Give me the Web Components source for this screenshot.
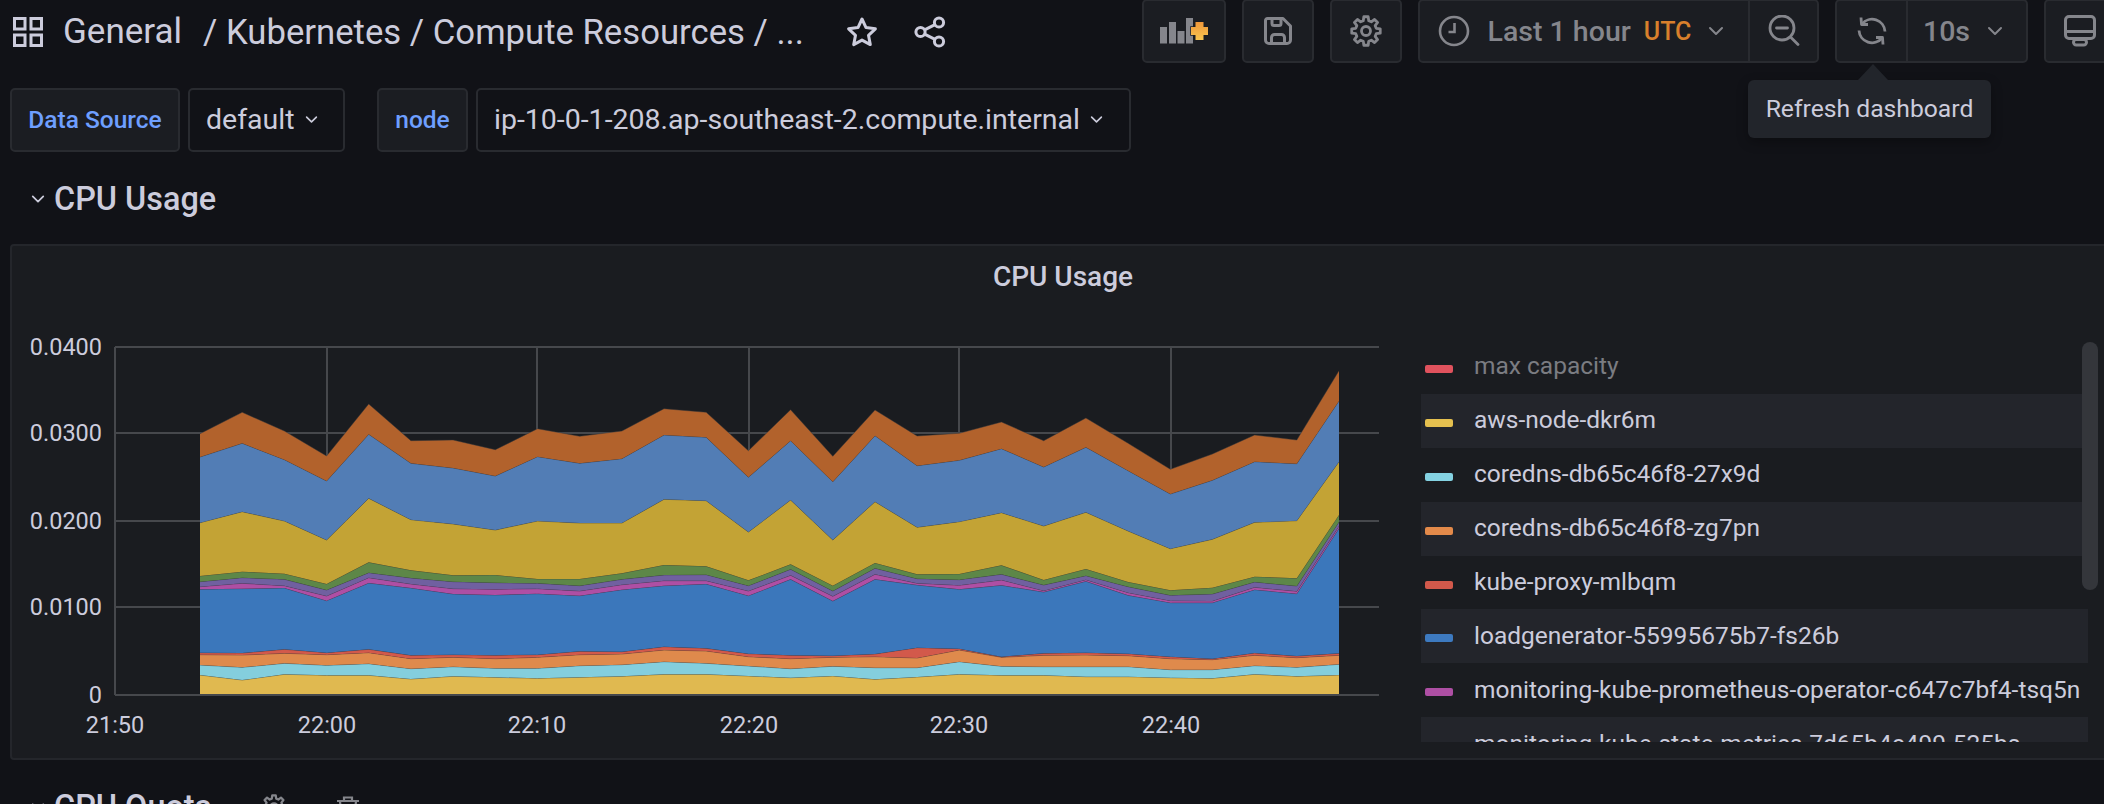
<!DOCTYPE html>
<html>
<head>
<meta charset="utf-8">
<title>Kubernetes / Compute Resources</title>
<style>
html, body {
    margin: 0;
    height: 804px;
    overflow: hidden;
    background: #111217;
    color: #ccccdc;
    font-family: Roboto, "Liberation Sans", sans-serif;
}
.muted { color: #85868c; font-weight: 500; font-size: 28.5px; }
.utc { color: #d8802c; font-weight: 500; font-size: 25px; margin-left: 13px; }
</style>
</head>
<body>

<gf-dashboard>
    <gf-toolbar>
        <gf-icon slot="title" name="grid" size="30"></gf-icon>
        <gf-title slot="title" folder="General" path="/ Kubernetes / Compute Resources / ..."></gf-title>
        <gf-icon slot="title" name="star" size="32" style="margin-left:42px"></gf-icon>
        <gf-icon slot="title" name="share" size="32" style="margin-left:36px"></gf-icon>

        <gf-tool-group><gf-tool-item style="width:80px"><gf-icon name="addpanel" size="56"></gf-icon></gf-tool-item></gf-tool-group>
        <gf-tool-group><gf-tool-item style="width:68px"><gf-icon name="save" size="30"></gf-icon></gf-tool-item></gf-tool-group>
        <gf-tool-group><gf-tool-item style="width:68px"><gf-icon name="gear" size="32"></gf-icon></gf-tool-item></gf-tool-group>
        <gf-tool-group>
            <gf-tool-item style="width:328px;padding-right:6px">
                <gf-icon name="clock" size="32" style="margin-right:18px"></gf-icon>
                <span class="muted">Last 1 hour</span>
                <span class="utc">UTC</span>
                <gf-icon name="chevron" size="16" style="margin-left:17px;color:#85868c"></gf-icon>
            </gf-tool-item>
            <gf-tool-item style="width:69px"><gf-icon name="zoomout" size="32"></gf-icon></gf-tool-item>
        </gf-tool-group>
        <gf-tool-group>
            <gf-tool-item style="width:69px">
                <gf-icon name="sync" size="30"></gf-icon>
                <gf-tooltip>Refresh dashboard</gf-tooltip>
            </gf-tool-item>
            <gf-tool-item style="width:120px;padding-right:8px">
                <span class="muted">10s</span>
                <gf-icon name="chevron" size="16" style="margin-left:17px;color:#85868c"></gf-icon>
            </gf-tool-item>
        </gf-tool-group>
        <gf-tool-group><gf-tool-item style="width:68px"><gf-icon name="monitor" size="32"></gf-icon></gf-tool-item></gf-tool-group>
    </gf-toolbar>

    <gf-variables>
        <gf-variable label="Data Source" value="default" width="170" select-width="157"></gf-variable>
        <gf-variable label="node" value="ip-10-0-1-208.ap-southeast-2.compute.internal" width="91" select-width="655"></gf-variable>
    </gf-variables>

    <gf-row-title>CPU Usage</gf-row-title>

    <gf-panel title="CPU Usage">
        <gf-chart></gf-chart>
        <gf-legend>
            <gf-legend-item color="#e0525d" dim>max capacity</gf-legend-item>
            <gf-legend-item color="#e5c04f">aws-node-dkr6m</gf-legend-item>
            <gf-legend-item color="#84d2e2">coredns-db65c46f8-27x9d</gf-legend-item>
            <gf-legend-item color="#e38a4a">coredns-db65c46f8-zg7pn</gf-legend-item>
            <gf-legend-item color="#d2594b">kube-proxy-mlbqm</gf-legend-item>
            <gf-legend-item color="#3d7ac0">loadgenerator-55995675b7-fs26b</gf-legend-item>
            <gf-legend-item color="#ae4fa4">monitoring-kube-prometheus-operator-c647c7bf4-tsq5n</gf-legend-item>
            <gf-legend-item color="#7060a0">monitoring-kube-state-metrics-7d65b4c499-525bs</gf-legend-item>
        </gf-legend>
    </gf-panel>

    <gf-row-title actions>CPU Quota</gf-row-title>
</gf-dashboard>

<script>
// Gear outline, 8 teeth, centred on 16,16
function gearPath () {
    let d			= "";
    for ( let i = 0; i < 8; i++ ) {
        const a			= i * Math.PI / 4;
        const pts		= [ [ -0.26, 10.6 ], [ -0.15, 14.4 ], [ 0.15, 14.4 ], [ 0.26, 10.6 ] ];
        pts.forEach( ([da, r]) => {
            const x		= 16 + r * Math.sin( a + da );
            const y		= 16 - r * Math.cos( a + da );
            d		       += ( d ? "L" : "M" ) + x.toFixed(2) + " " + y.toFixed(2);
        });
    }
    return d + "Z";
}

const ICONS = {
    grid: `<svg viewBox="0 0 30 30" fill="none" stroke="currentColor" stroke-width="3"><rect x="1.5" y="1.5" width="10.5" height="10.5"/><rect x="18" y="1.5" width="10.5" height="10.5"/><rect x="1.5" y="18" width="10.5" height="10.5"/><rect x="18" y="18" width="10.5" height="10.5"/></svg>`,
    star: `<svg viewBox="0 0 32 32" fill="none" stroke="currentColor" stroke-width="3" stroke-linejoin="round"><path d="M16 3l4 8.6 9.4 1.2-6.9 6.5 1.8 9.3L16 24.1 7.7 28.6l1.8-9.3-6.9-6.5L12 11.6z"/></svg>`,
    share: `<svg viewBox="0 0 32 32" fill="none" stroke="currentColor" stroke-width="3"><circle cx="6.5" cy="16" r="4.6"/><circle cx="25" cy="6.5" r="4.6"/><circle cx="25" cy="25.5" r="4.6"/><path d="M10.6 13.8L21 8.6M10.6 18.2L21 23.4"/></svg>`,
    addpanel: `<svg viewBox="1156 12 56 40"><defs><linearGradient id="pl" x1="0" y1="0" x2="0" y2="1"><stop offset="0" stop-color="#f0983a"/><stop offset="1" stop-color="#f8c550"/></linearGradient></defs><g fill="#85868c"><rect x="1160" y="28" width="7" height="16.5"/><rect x="1169" y="23" width="7" height="21.5"/><rect x="1177.5" y="32" width="7" height="12.5"/><rect x="1186" y="19" width="7" height="25.5"/></g><path d="M1195.5 23h8v5h4.5v8h-4.500v5h-8v-5h-4.500v-8h4.500z" fill="url(#pl)" stroke="#1b1d22" stroke-width="1.5" paint-order="stroke"/></svg>`,
    save: `<svg viewBox="0 0 30 30" fill="none" stroke="currentColor" stroke-width="3" stroke-linejoin="round"><path d="M4.5 2.5h15.5l7.5 7.5v14a3.5 3.5 0 0 1-3.5 3.5H6a3.5 3.5 0 0 1-3.500-3.500V4.500a2 2 0 0 1 2-2z"/><path d="M9 2.500v5a2 2 0 0 0 2 2h5a2 2 0 0 0 2-2v-5"/><path d="M8.500 27.500v-6a3 3 0 0 1 3-3h7a3 3 0 0 1 3 3v6"/></svg>`,
    gear: `<svg viewBox="0 0 32 32" fill="none" stroke="currentColor" stroke-width="2.800" stroke-linejoin="round"><path d="${gearPath()}"/><circle cx="16" cy="16" r="4.500"/></svg>`,
    clock: `<svg viewBox="0 0 32 32" fill="none" stroke="currentColor" stroke-width="2.600"><circle cx="16" cy="16" r="14"/><path d="M16.500 8v9H10.500"/></svg>`,
    zoomout: `<svg viewBox="0 0 32 32" fill="none" stroke="currentColor" stroke-width="2.800" stroke-linecap="round"><circle cx="14" cy="13" r="12"/><path d="M8.500 13h11M23 22.500l7 7"/></svg>`,
    sync: `<svg viewBox="0 0 30 30" fill="none" stroke="currentColor" stroke-width="2.800" stroke-linejoin="round"><path d="M4 1.500l.5 7H11"/><path d="M5 8a13 13 0 0 1 23 7.500"/><path d="M26 28.500l-.5-7H19"/><path d="M25 22a13 13 0 0 1-23-7.500"/></svg>`,
    monitor: `<svg viewBox="0 0 32 32" fill="none" stroke="currentColor" stroke-width="3"><rect x="1.500" y="1.500" width="29" height="22" rx="3.500"/><path d="M2 16.500h28"/><rect x="9.500" y="24.500" width="13" height="5.500" rx="2.700"/></svg>`,
    chevron: `<svg viewBox="0 0 16 16" fill="none" stroke="currentColor" stroke-width="2" stroke-linecap="round" stroke-linejoin="round"><path d="M2 5l6 6 6-6"/></svg>`,
    trash: `<svg viewBox="0 0 24 24" fill="none" stroke="currentColor" stroke-width="2.200"><path d="M1 6h22M8 6V2.500h8V6M4 6l1.500 17h13L20 6"/></svg>`,
};

class GfIcon extends HTMLElement {
    constructor () {
        super();
        this.attachShadow({ mode: "open" });
    }
    connectedCallback() {
        const size		= this.getAttribute("size") || 24;
        this.shadowRoot.innerHTML = `
            <style>
                :host { display: inline-flex; flex: none; width: ${size}px; height: ${size}px; }
                svg { width: 100%; height: 100%; display: block; }
            </style>
            ${ICONS[ this.getAttribute("name") ]}`;
    }
}

const dashboardTemplate = document.createElement("template");
dashboardTemplate.innerHTML = `
<style>
:host { display: block; width: 2116px; }
</style>
<slot></slot>`;

class GfDashboard extends HTMLElement {
    constructor () {
        super();
        this.attachShadow({ mode: "open" });
        this.shadowRoot.appendChild( dashboardTemplate.content.cloneNode(true) );
    }
}

const toolbarTemplate = document.createElement("template");
toolbarTemplate.innerHTML = `
<style>
:host { display: flex; height: 63px; align-items: stretch; padding-left: 13px; }
#title { display: flex; align-items: center; color: #ccccdc; }
#tools { display: flex; gap: 16px; margin-left: auto; }
</style>
<div id="title"><slot name="title"></slot></div>
<div id="tools"><slot></slot></div>`;

class GfToolbar extends HTMLElement {
    constructor () {
        super();
        this.attachShadow({ mode: "open" });
        this.shadowRoot.appendChild( toolbarTemplate.content.cloneNode(true) );
    }
}

class GfTitle extends HTMLElement {
    constructor () {
        super();
        this.attachShadow({ mode: "open" });
    }
    connectedCallback() {
        this.shadowRoot.innerHTML = `
            <style>
                :host { display: flex; align-items: center; margin-left: 20px; font-size: 35px; white-space: nowrap; }
                span:last-child { margin-left: 21px; font-size: 34.700px; }
            </style>
            <span>${this.getAttribute("folder")}</span><span>${this.getAttribute("path")}</span>`;
    }
}

const groupTemplate = document.createElement("template");
groupTemplate.innerHTML = `
<style>
:host {
    display: flex;
    background: #1b1d22;
    border: 2px solid #292b30;
    border-radius: 5px;
    box-sizing: border-box;
    height: 64px;
    margin-top: -1px;
}
::slotted(gf-tool-item:not(:first-child)) { border-left: 2px solid #292b30; }
</style>
<slot></slot>`;

class GfToolGroup extends HTMLElement {
    constructor () {
        super();
        this.attachShadow({ mode: "open" });
        this.shadowRoot.appendChild( groupTemplate.content.cloneNode(true) );
    }
}

const itemTemplate = document.createElement("template");
itemTemplate.innerHTML = `
<style>
:host {
    display: flex;
    position: relative;
    box-sizing: border-box;
    align-items: center;
    justify-content: center;
    color: #85868c;
    white-space: nowrap;
}
</style>
<slot></slot>`;

class GfToolItem extends HTMLElement {
    constructor () {
        super();
        this.attachShadow({ mode: "open" });
        this.shadowRoot.appendChild( itemTemplate.content.cloneNode(true) );
    }
}

const tooltipTemplate = document.createElement("template");
tooltipTemplate.innerHTML = `
<style>
:host {
    position: absolute;
    top: 79px;
    left: -89px;
    z-index: 5;
    box-sizing: border-box;
    width: 243px;
    height: 58px;
    padding-bottom: 2px;
    display: flex;
    align-items: center;
    justify-content: center;
    background: #22252b;
    border-radius: 6px;
    color: #ccccdc;
    font-size: 24.700px;
    box-shadow: 0 4px 12px rgba(0, 0, 0, .3);
}
:host::before {
    content: "";
    position: absolute;
    top: -16px;
    left: 110px;
    border: 15px solid transparent;
    border-top: 0;
    border-bottom: 16px solid #22252b;
}
</style>
<slot></slot>`;

class GfTooltip extends HTMLElement {
    constructor () {
        super();
        this.attachShadow({ mode: "open" });
        this.shadowRoot.appendChild( tooltipTemplate.content.cloneNode(true) );
    }
}

const variablesTemplate = document.createElement("template");
variablesTemplate.innerHTML = `
<style>
:host { display: flex; gap: 32px; margin-top: 25px; padding-left: 10px; }
</style>
<slot></slot>`;

class GfVariables extends HTMLElement {
    constructor () {
        super();
        this.attachShadow({ mode: "open" });
        this.shadowRoot.appendChild( variablesTemplate.content.cloneNode(true) );
    }
}

class GfVariable extends HTMLElement {
    constructor () {
        super();
        this.attachShadow({ mode: "open" });
    }
    connectedCallback() {
        this.shadowRoot.innerHTML = `
            <style>
                :host { display: flex; gap: 8px; height: 64px; }
                div {
                    box-sizing: border-box;
                    display: flex;
                    align-items: center;
                    padding-bottom: 2px;
                    border: 2px solid #292b30;
                    border-radius: 5px;
                    white-space: nowrap;
                }
                #label {
                    width: ${this.getAttribute("width")}px;
                    justify-content: center;
                    background: #1b1d22;
                    color: #6e9fff;
                    font-weight: 500;
                    font-size: 24.500px;
                }
                #value {
                    width: ${this.getAttribute("select-width")}px;
                    padding-left: 16px;
                    font-size: 28.500px;
                }
                gf-icon { margin-left: 10px; }
            </style>
            <div id="label">${this.getAttribute("label")}</div>
            <div id="value">${this.getAttribute("value")}<gf-icon name="chevron" size="13"></gf-icon></div>`;
    }
}

class GfRowTitle extends HTMLElement {
    constructor () {
        super();
        this.attachShadow({ mode: "open" });
    }
    connectedCallback() {
        const actions		= this.hasAttribute("actions") ? `
            <gf-icon name="gear" size="26" style="margin-left:49px;color:#85868c"></gf-icon>
            <gf-icon name="trash" size="24" style="margin-left:49px;color:#85868c"></gf-icon>` : "";
        this.shadowRoot.innerHTML = `
            <style>
                :host {
                    display: flex;
                    box-sizing: border-box;
                    align-items: center;
                    height: 92px;
                    padding: 2px 0 0 31px;
                    font-size: 32.400px;
                    font-weight: 500;
                    color: #ccccdc;
                }
                #chev { margin-right: 9px; }
            </style>
            <gf-icon id="chev" name="chevron" size="14"></gf-icon><span><slot></slot></span>${actions}`;
    }
}

const panelTemplate = document.createElement("template");
panelTemplate.innerHTML = `
<style>
:host {
    display: block;
    box-sizing: border-box;
    margin-left: 10px;
    height: 516px;
    background: #1a1c20;
    border: 2px solid #24262b;
    border-radius: 4px;
}
#title {
    box-sizing: border-box;
    height: 58px;
    padding-top: 2px;
    display: flex;
    align-items: center;
    justify-content: center;
    font-size: 28px;
    font-weight: 500;
}
#body { display: flex; }
</style>
<div id="title"></div>
<div id="body"><slot></slot></div>`;

class GfPanel extends HTMLElement {
    constructor () {
        super();
        this.attachShadow({ mode: "open" });
        this.shadowRoot.appendChild( panelTemplate.content.cloneNode(true) );
        this.$title		= this.shadowRoot.querySelector("#title");
    }
    connectedCallback() {
        this.$title.textContent	= this.getAttribute("title");
        this.removeAttribute("title");
    }
}

// Stack boundaries read off the reference, one row per series, 28 samples,
// in zoomed px: page y = 320 + v / 3. Bottom of the stack comes first.
const SERIES = [
    { fill: "#e0b950", top: [1065,1080,1063,1066,1066,1077,1069,1072,1075,1072,1069,1063,1063,1068,1073,1068,1078,1071,1063,1066,1066,1070,1070,1073,1075,1063,1069,1065] },
    { fill: "#84cedd", top: [1035,1042,1030,1036,1031,1046,1040,1045,1045,1037,1034,1025,1030,1038,1046,1039,1043,1043,1025,1039,1040,1040,1040,1049,1049,1037,1042,1033] },
    { fill: "#df8a4c", top: [1004,1005,1000,1004,998,1016,1012,1016,1012,1004,1002,990,993,1010,1016,1012,1010,1014,990,1012,1006,1005,1007,1016,1019,1006,1013,1006] },
    { fill: "#d2594b", top: [998,999,988,998,988,1006,1004,1006,1004,994,995,980,985,1001,1006,1007,1002,983,986,1010,1000,998,1001,1010,1016,999,1008,1000] },
    { fill: "#3b77bb", top: [808,806,804,842,789,804,822,825,821,827,809,797,792,827,778,843,778,795,808,796,816,784,826,848,848,809,821,625] },
    { fill: "#ae4fa4", top: [800,790,797,828,773,792,806,808,806,813,794,782,782,813,766,829,763,790,796,780,812,779,818,842,843,802,814,618] },
    { fill: "#7060a0", top: [785,773,778,810,758,774,785,788,790,797,778,765,764,797,748,813,745,776,779,763,795,767,800,826,822,786,798,606] },
    { fill: "#5d8748", top: [768,755,761,792,727,751,766,765,777,777,760,735,739,781,733,797,729,763,762,736,780,747,786,811,803,770,775,585] },
    { fill: "#c3a335", top: [608,575,603,660,535,599,612,630,603,609,609,538,542,636,540,660,545,622,605,578,618,577,633,686,658,607,602,425] },
    { fill: "#527db5", top: [411,370,419,483,343,430,444,468,410,430,416,345,352,472,362,485,347,437,421,386,441,382,452,522,481,425,431,243] },
    { fill: "#b2622c", top: [341,277,333,408,252,362,360,389,326,349,333,266,277,392,269,409,270,348,340,306,362,294,370,448,402,345,360,152] },
];

const X0 = 200, DX = 42.185, BASE = 695;
const GRID_Y = [ [347, "0.0400"], [433, "0.0300"], [521, "0.0200"], [607, "0.0100"], [695, "0"] ];
const GRID_X = [ [115, "21:50"], [327, "22:00"], [537, "22:10"], [749, "22:20"], [959, "22:30"], [1171, "22:40"] ];

class GfChart extends HTMLElement {
    constructor () {
        super();
        this.attachShadow({ mode: "open" });
    }
    connectedCallback() {
        const px		= i => (X0 + i * DX).toFixed(1);
        const py		= v => (320 + v / 3).toFixed(1);
        let lower		= null;
        let shapes		= "";

        for ( let s of SERIES ) {
            const upper		= s.top.map( (v, i) => px(i) + "," + py(v) );
            const bottom	= lower ? lower.slice().reverse() : [ px(27) + "," + BASE, px(0) + "," + BASE ];
            shapes	       += `<polygon points="${upper.concat(bottom).join(" ")}" fill="${s.fill}"/>`;
            shapes	       += `<polyline points="${upper.join(" ")}" fill="none" stroke="#33363a" stroke-opacity=".45" stroke-width="1"/>`;
            lower		= upper;
        }

        const grid		= GRID_Y.map( ([y]) => `<path d="M115 ${y}H1379"/>` ).join("")
              + GRID_X.map( ([x]) => `<path d="M${x} 347V695"/>` ).join("");
        const yLabels		= GRID_Y.map( ([y, t]) => `<text x="102" y="${y + 7.500}" text-anchor="end">${t}</text>` ).join("");
        const xLabels		= GRID_X.map( ([x, t]) => `<text x="${x}" y="732.500" text-anchor="middle">${t}</text>` ).join("");

        this.shadowRoot.innerHTML = `
            <style>
                :host { display: block; flex: none; width: 1409px; height: 453px; }
                svg { display: block; }
                text { font-family: Roboto, sans-serif; font-size: 23.500px; fill: #ccccdc; }
            </style>
            <svg width="1409" height="453" viewBox="12 304 1409 453">
                <g stroke="#46484c" stroke-width="2" fill="none">${grid}</g>
                ${shapes}
                <path d="M115 695H1379" stroke="#46484c" stroke-width="2"/>
                ${yLabels}${xLabels}
            </svg>`;
    }
}

const legendTemplate = document.createElement("template");
legendTemplate.innerHTML = `
<style>
:host {
    display: block;
    position: relative;
    flex: none;
    width: 667px;
    height: 402px;
    margin-top: 36px;
}
#thumb {
    position: absolute;
    top: 2px;
    left: 661px;
    width: 16px;
    height: 248px;
    background: #34363b;
    border-radius: 8px;
}
#rows { height: 402px; overflow: hidden; }
::slotted(gf-legend-item:nth-child(even)) { background: #23252b; }
</style>
<div id="rows"><slot></slot></div>
<div id="thumb"></div>`;

class GfLegend extends HTMLElement {
    constructor () {
        super();
        this.attachShadow({ mode: "open" });
        this.shadowRoot.appendChild( legendTemplate.content.cloneNode(true) );
    }
}

class GfLegendItem extends HTMLElement {
    constructor () {
        super();
        this.attachShadow({ mode: "open" });
    }
    connectedCallback() {
        const dim		= this.hasAttribute("dim");
        this.shadowRoot.innerHTML = `
            <style>
                :host {
                    display: flex;
                    align-items: center;
                    height: 53.900px;
                    padding-left: 4px;
                    font-size: 24.500px;
                    white-space: nowrap;
                    color: ${ dim ? "#7b7c82" : "#ccccdc" };
                }
                i {
                    width: 28px;
                    height: 8px;
                    margin: 4px 21px 0 0;
                    border-radius: 2px;
                    background: ${this.getAttribute("color")};
                }
                span { margin-bottom: 2px; }
            </style>
            <i></i><span><slot></slot></span>`;
    }
}

customElements.define("gf-icon", GfIcon );
customElements.define("gf-dashboard", GfDashboard );
customElements.define("gf-toolbar", GfToolbar );
customElements.define("gf-title", GfTitle );
customElements.define("gf-tool-group", GfToolGroup );
customElements.define("gf-tool-item", GfToolItem );
customElements.define("gf-tooltip", GfTooltip );
customElements.define("gf-variables", GfVariables );
customElements.define("gf-variable", GfVariable );
customElements.define("gf-row-title", GfRowTitle );
customElements.define("gf-panel", GfPanel );
customElements.define("gf-chart", GfChart );
customElements.define("gf-legend", GfLegend );
customElements.define("gf-legend-item", GfLegendItem );
</script>
</body>
</html>
